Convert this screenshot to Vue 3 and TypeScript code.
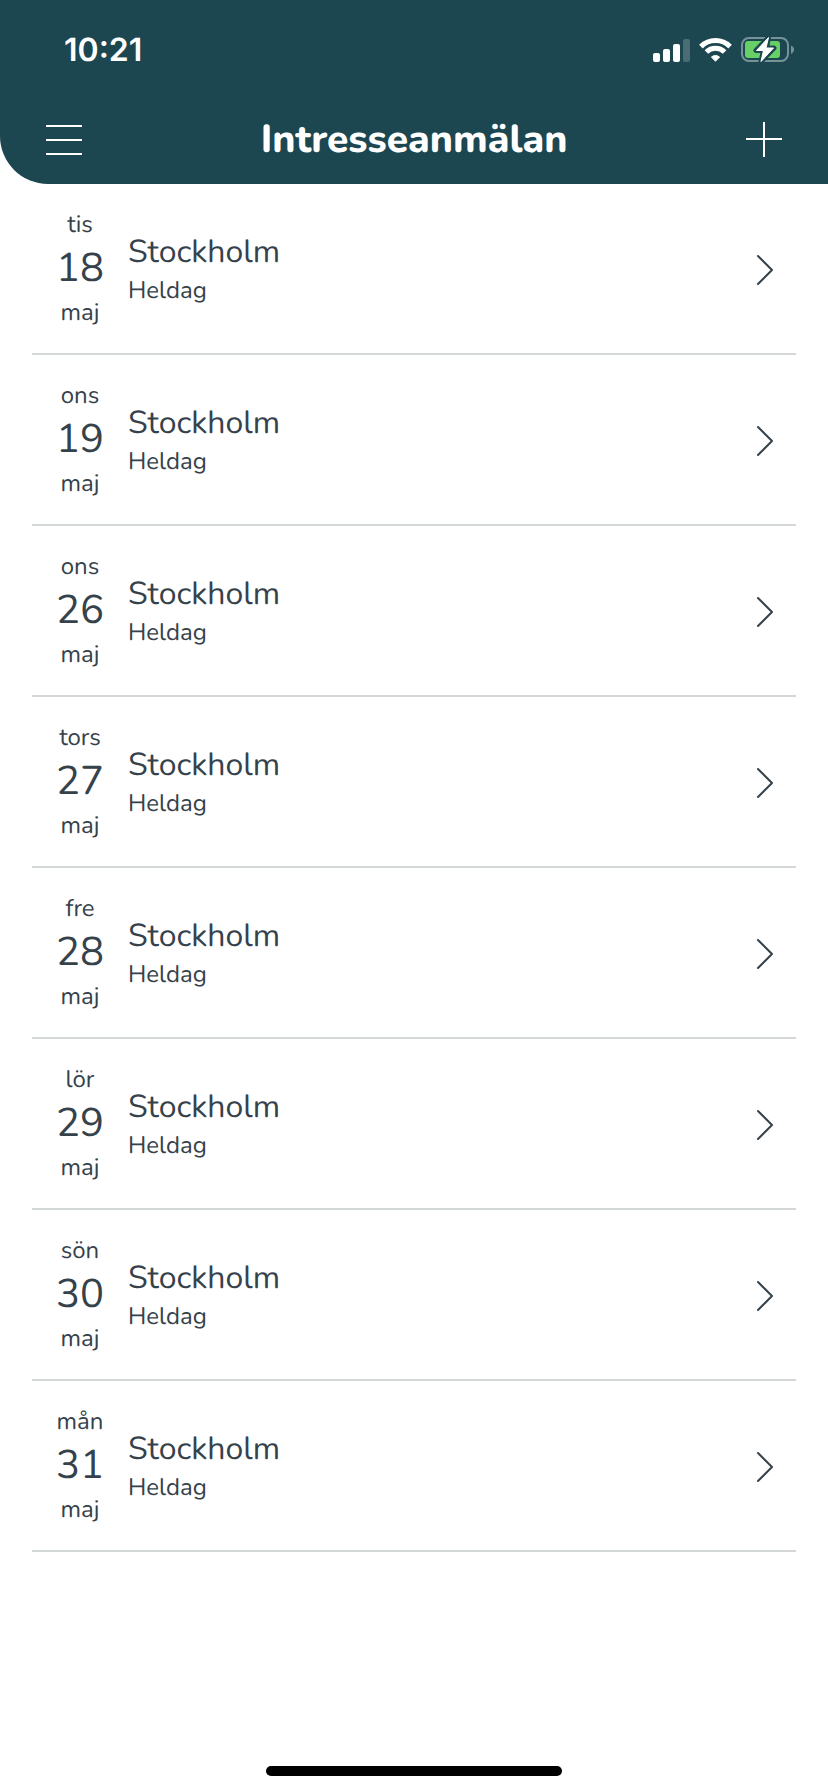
<script setup lang="ts">
interface Shift {
  id: number
  weekday: string
  day: number
  month: string
  place: string
  period: string
}

const shifts: Shift[] = (
  [
    ['tis', 18],
    ['ons', 19],
    ['ons', 26],
    ['tors', 27],
    ['fre', 28],
    ['lör', 29],
    ['sön', 30],
    ['mån', 31],
  ] as [string, number][]
).map(([weekday, day]) => ({
  id: day,
  weekday,
  day,
  month: 'maj',
  place: 'Stockholm',
  period: 'Heldag',
}))
</script>

<template>
  <div class="screen">
    <header class="header">
      <div class="status">
        <span class="clock">10:21</span>
        <div class="indicators">
          <svg width="37" height="26" viewBox="0 0 37 26" fill="#fff" aria-hidden="true">
            <rect x="0" y="16" width="7" height="9" rx="2" />
            <rect x="10" y="12" width="7" height="13" rx="2" />
            <rect x="20" y="7" width="7" height="18" rx="2" />
            <rect x="30" y="2" width="7" height="23" rx="2" fill="#4a6c73" />
          </svg>
          <svg width="33" height="26" viewBox="0 0 33 26" fill="none" stroke="#fff" stroke-width="5" aria-hidden="true">
            <path d="M1.9 9.6A20.8 20.8 0 0 1 31.1 9.6" />
            <path d="M7.4 15.1A12.9 12.9 0 0 1 25.6 15.1" />
            <path d="M16.5 24.2 12.4 20.1A6 6 0 0 1 20.6 20.1Z" fill="#fff" stroke-width="1" stroke-linejoin="round" />
          </svg>
          <svg width="54" height="28" viewBox="0 0 54 28" aria-hidden="true">
            <rect x="1" y="2" width="46" height="23" rx="7" fill="none" stroke="#76939a" stroke-width="2" />
            <path d="M50 9.5C52 10 53 12 53 13.5S52 17 50 18Z" fill="#76939a" />
            <rect x="4" y="5" width="35" height="17" rx="3" fill="#66cf66" />
            <path d="M27.5 1.5 15 14.5H22.5L20 25.5 33 12H25.5Z" fill="#fff" stroke="#1d4750" stroke-width="5" stroke-linejoin="round" />
            <path d="M27.5 1.5 15.5 14.5H22.5L20 25.5 32.5 12H25Z" fill="#fff" stroke="#fff" stroke-width="1" stroke-linejoin="round" />
          </svg>
        </div>
      </div>
      <nav class="bar">
        <button class="icon-button" type="button" aria-label="Meny">
          <svg width="36" height="36" viewBox="0 0 36 36" stroke="#fff" stroke-width="2">
            <path d="M0 4H36M0 18H36M0 32H36" />
          </svg>
        </button>
        <h1 class="title">Intresseanmälan</h1>
        <button class="icon-button" type="button" aria-label="Lägg till">
          <svg width="36" height="36" viewBox="0 0 36 36" stroke="#fff" stroke-width="2">
            <path d="M0 17H36M18 0V35" />
          </svg>
        </button>
      </nav>
    </header>

    <main>
      <ul class="list">
        <li v-for="shift in shifts" :key="shift.id">
          <a class="row" :href="`#maj-${shift.day}`">
            <span class="date">
              <span class="small">{{ shift.weekday }}</span>
              <span class="day">{{ shift.day }}</span>
              <span class="small">{{ shift.month }}</span>
            </span>
            <span class="info">
              <span class="place">{{ shift.place }}</span>
              <span class="small">{{ shift.period }}</span>
            </span>
            <svg width="18" height="34" viewBox="0 0 18 34" fill="none" stroke="#36424b" stroke-width="2" stroke-linecap="round" stroke-linejoin="round" aria-hidden="true">
              <path d="M2 3 16 17 2 31" />
            </svg>
          </a>
        </li>
      </ul>
    </main>

    <footer class="home"><span class="home-bar"></span></footer>
  </div>
</template>

<style>
body {
  margin: 0;
  background: #fff;
}
</style>

<style scoped>
.screen {
  display: flex;
  flex-direction: column;
  min-height: 100vh;
  color: #36424b;
  font-family: Nunito, Lato, "Open Sans", sans-serif;
  text-rendering: geometricPrecision;
}

.header {
  background: #1d4750;
  border-bottom-left-radius: 48px;
  color: #fff;
}

.status {
  display: flex;
  align-items: center;
  justify-content: space-between;
  box-sizing: border-box;
  height: 96px;
  padding: 4px 33px 0 64px;
}

.clock {
  font: 600 32px/40px Inter, sans-serif;
}

.indicators {
  display: flex;
  align-items: center;
  gap: 9px;
}

.bar {
  display: flex;
  align-items: center;
  justify-content: space-between;
  height: 88px;
  padding: 0 46px;
}

.icon-button {
  display: flex;
  padding: 0;
  border: 0;
  background: none;
  color: inherit;
  cursor: pointer;
}

.title {
  margin: 0;
  font-size: 39px;
  line-height: 48px;
  font-weight: 800;
}

.list {
  margin: 0;
  padding: 0 32px;
  list-style: none;
}

.row {
  display: flex;
  align-items: center;
  padding: 25px 22px 23px 0;
  border-bottom: 2px solid #d3d8d7;
  color: inherit;
  text-decoration: none;
}

.date {
  display: flex;
  flex-direction: column;
  align-items: center;
  width: 96px;
}

.info {
  display: flex;
  flex: 1;
  flex-direction: column;
}

.small {
  font-size: 24px;
  line-height: 33px;
}

.day {
  font-size: 40px;
  line-height: 55px;
}

.place {
  font-size: 32px;
  line-height: 44px;
}

.home {
  display: flex;
  justify-content: center;
  margin-top: auto;
  padding: 16px 0;
}

.home-bar {
  width: 296px;
  height: 10px;
  border-radius: 5px;
  background: #000;
}
</style>
